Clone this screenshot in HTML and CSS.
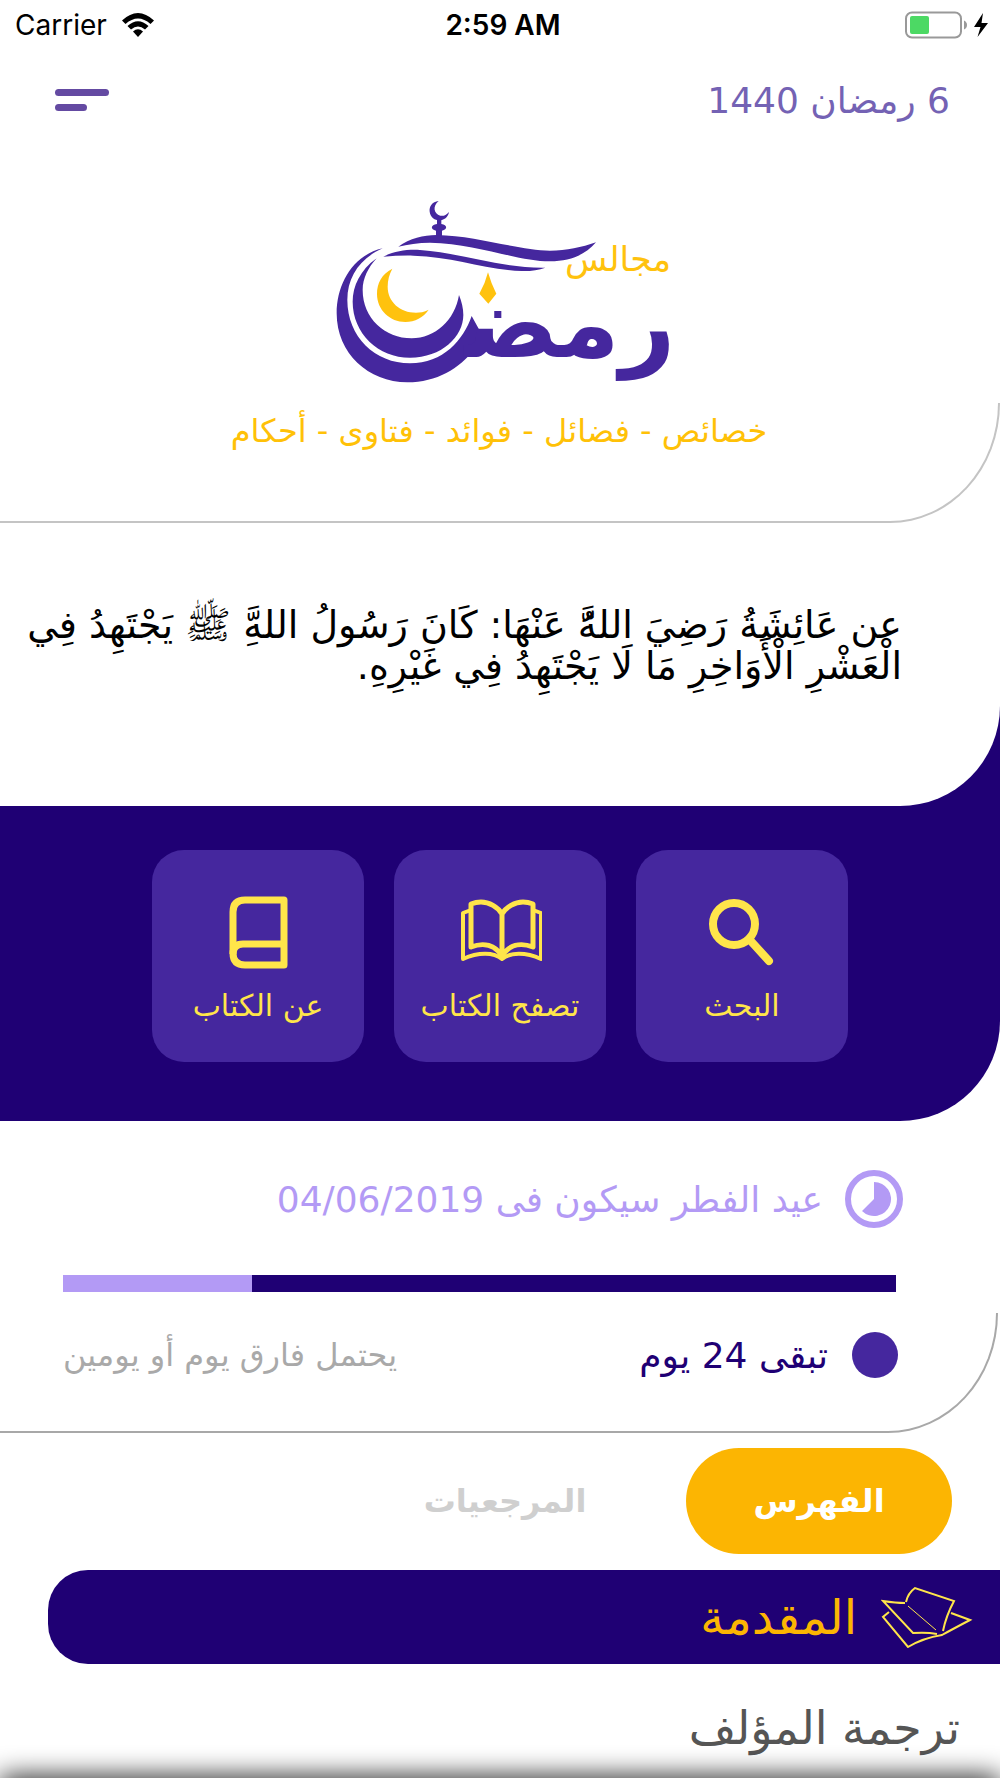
FILE: index.html
```html
<!DOCTYPE html>
<html lang="ar" dir="rtl">

<head>
  <meta charset="UTF-8" />
  <meta name="viewport" content="width=device-width, initial-scale=1.0" />
  <title>مجالس رمضان</title>
  <link rel="stylesheet" href="styles.css">
</head>

<body>
  <div class="status-bar" dir="ltr">
    <div class="carrier">
      <span>Carrier</span>
      <svg class="wifi" viewBox="0 0 34 26" aria-hidden="true">
        <path d="M1 8.500Q17 -6.500 33 8.500L29.500 12Q17 1 4.500 12Z" />
        <path d="M6.500 14Q17 4.500 27.500 14L24 17.500Q17 11.500 10 17.500Z" />
        <path d="M12 19.500Q17 15 22 19.500L17 25Z" />
      </svg>
    </div>
    <span class="clock">2:59 AM</span>
    <div class="battery">
      <svg viewBox="0 0 86 28" aria-hidden="true">
        <rect x="1" y="1.500" width="55" height="25" rx="6" fill="#fff" stroke="#999" stroke-width="2" />
        <rect x="5" y="5" width="19" height="18" rx="2" fill="#4cd964" />
        <path d="M59 9.500Q62 11 62 14Q62 17 59 18.500Z" fill="#999" />
        <path d="M78 2L69 16H75.500L72.500 26L83 12H76.500Z" />
      </svg>
    </div>
  </div>

  <header class="top">
    <p class="date">6 رمضان 1440</p>
    <button class="menu" type="button" aria-label="القائمة">
      <span></span>
      <span class="short"></span>
    </button>
  </header>

  <main>
    <svg class="logo" viewBox="0 0 1080 600" role="img" aria-label="مجالس رمضان">
      <g fill="#45279e">
        <!-- finial -->
        <path d="M356 33C336 35 327 50 329 65C331 82 345 91 358 91C372 91 384 82 387 66C378 76 370 79 361 77C341 72 337 48 356 33Z" />
        <path d="M351 88H364V102C383 104 383 119 366 122V140H348V122C331 119 331 104 351 102Z" />
        <!-- roof -->
        <path d="M235 170C270 145 310 135 350 135C470 137 600 182 690 182C740 182 785 172 828 157C795 195 750 214 690 214C590 214 470 160 330 158C295 158 262 163 235 170Z" />
        <path d="M190 200C225 183 260 178 300 180C420 188 540 235 676 233C655 240 630 244 605 243C490 238 400 200 280 197C250 196 220 198 190 200Z" />
        <!-- crescents -->
        <path d="M188 175C100 195 50 280 50 370C50 490 145 577 262 577C350 577 420 535 460 480L500 460L455 378C430 450 370 520 270 520C165 520 82 440 82 330C82 260 120 205 188 175Z" />
        <path d="M170 205C120 240 98 290 98 335C98 430 175 503 270 503C365 503 430 440 430 375C430 355 425 335 417 315C405 390 345 445 275 445C195 445 128 385 128 300C128 265 145 232 170 205Z" />
      </g>
      <text class="logo-main" x="750" y="502">رمض&zwj;</text>
      <text class="logo-small" x="894" y="244">مجالس</text>
      <g fill="#ffc20e">
        <path d="M217 236C185 252 171 280 171 312C171 360 210 396 256 396C285 396 310 382 326 359C312 366 300 368 288 368C240 368 203 335 203 290C203 270 208 252 217 236Z" />
        <path d="M504 247Q513 280 529 311L505 341L478 311Q496 280 504 247Z" />
      </g>
    </svg>

    <p class="tagline">خصائص - فضائل - فوائد - فتاوى - أحكام</p>

    <div class="panel">
      <blockquote class="hadith">عن عَائِشَةُ رَضِيَ اللهَُّ عَنْهَا: كَانَ رَسُولُ اللهَِّ ﷺ يَجْتَهِدُ فِي الْعَشْرِ الْأَوَاخِرِ مَا لَا يَجْتَهِدُ فِي غَيْرِهِ.</blockquote>

      <nav class="cards">
        <a class="card" href="#search">
          <svg viewBox="0 0 84 84" fill="none" stroke="#ffe54a" aria-hidden="true">
            <circle cx="34" cy="36" r="21" stroke-width="8" />
            <path d="M49 51L69 73" stroke-width="8" stroke-linecap="round" />
          </svg>
          البحث
        </a>
        <a class="card" href="#read">
          <svg viewBox="-2 -2 84 84" fill="none" stroke="#ffe54a" stroke-width="5" stroke-linejoin="round" aria-hidden="true">
            <path d="M42 68V24C38 17 29 12 21 12Q16 12 11 14V57C24 52 35 55 42 66C49 55 60 52 73 57V14Q68 12 63 12C55 12 46 17 42 24" />
            <path d="M11 20L3 23V69C18 62 34 62 42 69C50 62 66 62 81 69V23L73 20" stroke-width="4" />
          </svg>
          تصفح الكتاب
        </a>
        <a class="card" href="#about">
          <svg viewBox="0 -1 84 84" fill="none" stroke="#ffe54a" stroke-width="7" stroke-linejoin="round" aria-hidden="true">
            <path d="M68 11H29Q17 11 17 23V64Q17 76 29 76H68Z" />
            <path d="M17 65Q17 55 27 55H68" />
          </svg>
          عن الكتاب
        </a>
      </nav>
    </div>

    <section class="countdown">
      <div class="eid">
        <svg viewBox="0 0 58 58" aria-hidden="true">
          <circle cx="29" cy="29" r="26" fill="none" stroke="#b39af5" stroke-width="6" />
          <path d="M29 12A17 17 0 1 1 17 41L29 29Z" fill="#b39af5" />
        </svg>
        <p>عيد الفطر سيكون فى 04/06/2019</p>
      </div>
      <div class="bar" role="progressbar" aria-label="الأيام المتبقية" aria-valuemin="0" aria-valuemax="31" aria-valuenow="24">
        <div class="bar-left" style="width: 77.3%"></div>
      </div>
    </section>
    <div class="legend">
      <span class="dot"></span>
      <span class="remaining">تبقى 24 يوم</span>
      <span class="note">يحتمل فارق يوم أو يومين</span>
    </div>

    <div class="tabs">
      <button class="tab active" type="button">الفهرس</button>
      <button class="tab" type="button">المرجعيات</button>
    </div>

    <a class="chapter" href="#intro">
      <svg viewBox="0 0 92 62" fill="none" stroke="#ffe54a" stroke-width="2" aria-hidden="true">
        <path d="M25 16Q27 7 34 2L73 15Q65 30 62 45" />
        <path d="M24 17Q15 17 2 15L32 47Q46 46 56 48" />
        <path d="M27 20L55 44" stroke-width="1" />
        <path d="M8 26L2 31L27 61Q42 52 61 49Q70 44 89 34L70 27" />
      </svg>
      المقدمة
    </a>
    <a class="entry" href="#author">ترجمة المؤلف</a>
  </main>

  <div class="bottom-shade"></div>
</body>

</html>
```

FILE: styles.css
```css
* {
  box-sizing: border-box;
  margin: 0;
  padding: 0;
}

body {
  font-family: 'DejaVu Sans', sans-serif;
  background: #fff;
  color: #000;
  min-height: 100vh;
  overflow: hidden;
}

button {
  font: inherit;
  border: none;
  background: none;
  cursor: pointer;
}

a {
  text-decoration: none;
}

/* status bar */
.status-bar {
  display: grid;
  grid-template-columns: 1fr auto 1fr;
  align-items: center;
  height: 50px;
  padding: 0 9px 0 15px;
  font-family: Inter, sans-serif;
  font-size: 28px;
}

.carrier {
  display: flex;
  align-items: center;
  gap: 14px;
}

.wifi {
  width: 34px;
  height: 26px;
}

.clock {
  font-weight: 600;
}

.battery {
  display: flex;
  justify-content: flex-end;
}

.battery svg {
  width: 86px;
  height: 28px;
}

/* header */
.top {
  display: flex;
  align-items: center;
  justify-content: space-between;
  height: 100px;
  padding: 0 50px 0 55px;
}

.date {
  color: #7462b4;
  font-size: 36px;
}

.menu {
  display: flex;
  flex-direction: column;
  gap: 8px;
}

.menu span {
  width: 54px;
  height: 7px;
  border-radius: 4px;
  background: #644aa2;
}

.menu .short {
  align-self: flex-end;
  width: 32px;
}

.logo {
  display: block;
  width: 360px;
  height: 200px;
  margin: 40px auto 13px;
}

.logo text {
  direction: rtl;
  text-anchor: middle;
}

.logo-main {
  fill: #45279e;
  font-size: 290px;
  font-weight: bold;
}

.logo-small {
  fill: #ffc20e;
  font-size: 104px;
}

.tagline {
  height: 120px;
  padding-top: 8px;
  border: 2px solid #c4c4c4;
  border-width: 0 2px 2px 0;
  border-bottom-right-radius: 110px 120px;
  color: #ffc107;
  font-size: 32px;
  line-height: 40px;
  text-align: center;
}

/* hadith and shortcuts */
.panel {
  background: #1f0074;
  border-bottom-right-radius: 100px;
}

.hadith {
  min-height: 283px;
  padding: 82px 98px 0 12px;
  background: #fff;
  border-bottom-right-radius: 100px;
  font-size: 38px;
  line-height: 41px;
}

.cards {
  display: flex;
  justify-content: center;
  gap: 30px;
  padding: 44px 20px 59px;
}

.card {
  display: flex;
  flex-direction: column;
  align-items: center;
  gap: 14px;
  width: 212px;
  height: 212px;
  padding-top: 38px;
  border-radius: 32px;
  background: #45279e;
  color: #ffe54a;
  font-size: 30px;
  line-height: 40px;
}

.card svg {
  width: 84px;
  height: 84px;
}

/* countdown */
.countdown {
  padding: 49px 97px 0 63px;
}

.eid {
  display: flex;
  align-items: center;
  gap: 22px;
  color: #b39af5;
  font-size: 36px;
}

.eid svg {
  width: 58px;
  height: 58px;
}

.bar {
  height: 17px;
  margin: 47px 7px 21px 0;
  background: #b39af5;
}

.bar-left {
  height: 100%;
  background: #1f0074;
}

.legend {
  display: flex;
  align-items: center;
  height: 120px;
  margin-right: 2px;
  padding: 0 98px 34px 63px;
  border: 2px solid #a8a8a8;
  border-width: 0 2px 2px 0;
  border-bottom-right-radius: 110px 120px;
}

.dot {
  width: 46px;
  height: 46px;
  margin-left: 24px;
  border-radius: 50%;
  background: #45279e;
}

.remaining {
  color: #1f0074;
  font-size: 36px;
}

.note {
  margin-right: auto;
  color: #a9a9a9;
  font-size: 32px;
}

/* tabs */
.tabs {
  display: flex;
  gap: 48px;
  padding: 15px 48px 16px;
}

.tab {
  width: 266px;
  height: 106px;
  border-radius: 53px;
  color: #cfcfcf;
  font-size: 32px;
  font-weight: bold;
}

.tab.active {
  background: #fcb502;
  color: #fff;
}

.chapter {
  display: flex;
  align-items: center;
  gap: 24px;
  height: 94px;
  margin-left: 48px;
  padding-right: 27px;
  border-top-left-radius: 40px;
  border-bottom-left-radius: 40px;
  background: #1f0074;
  color: #fcb502;
  font-size: 48px;
}

.chapter svg {
  width: 92px;
  height: 62px;
}

.entry {
  display: block;
  padding: 34px 40px;
  color: #555;
  font-size: 46px;
  line-height: 60px;
}

/* shadow cast by the sheet under the fold */
.bottom-shade {
  position: fixed;
  right: 12px;
  bottom: 0;
  left: 12px;
  height: 0;
  box-shadow: 0 12px 28px 12px #000;
}
```
